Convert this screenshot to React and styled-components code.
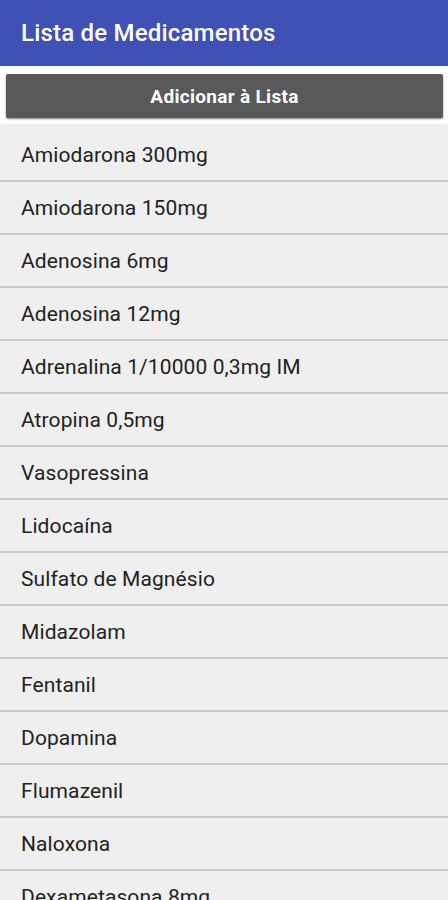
import React from 'react'
import styled, { createGlobalStyle } from 'styled-components'

const Global = createGlobalStyle`
  body {
    margin: 0;
    background: #ffffff;
    font-family: Roboto, "Liberation Sans", sans-serif;
  }
`

const Page = styled.div`
  width: 448px;
  height: 900px;
  overflow: hidden;
  background: #ffffff;
`

const Header = styled.header`
  height: 66px;
  background: #3f51b5;
  border-bottom: 1px solid #3553c8;
  display: flex;
  align-items: center;
  padding: 0 21px;
  box-sizing: border-box;
`

const Title = styled.h1`
  margin: 0;
  color: #ffffff;
  font-size: 24px;
  font-weight: 500;
  letter-spacing: 0.2px;
`

const ButtonWrap = styled.div`
  padding: 8px 5px 6px 6px;
`

const AddButton = styled.button`
  width: 100%;
  height: 44px;
  border: none;
  border-radius: 2px;
  background: #595959;
  color: #ffffff;
  font-family: Roboto, "Liberation Sans", sans-serif;
  font-size: 19px;
  font-weight: 700;
  letter-spacing: 0.3px;
  box-shadow: 0 1px 2px rgba(0, 0, 0, 0.5);
`

const List = styled.ul`
  list-style: none;
  margin: 0;
  padding: 5px 0 0;
  background: #efefef;
`

const Row = styled.li`
  height: 51px;
  display: flex;
  align-items: center;
  padding: 0 21px;
  font-size: 21px;
  letter-spacing: 0.1px;
  color: #222222;
  border-bottom: 2px solid #c9c9c9;
`

const meds = [
  'Amiodarona 300mg',
  'Amiodarona 150mg',
  'Adenosina 6mg',
  'Adenosina 12mg',
  'Adrenalina 1/10000 0,3mg IM',
  'Atropina 0,5mg',
  'Vasopressina',
  'Lidocaína',
  'Sulfato de Magnésio',
  'Midazolam',
  'Fentanil',
  'Dopamina',
  'Flumazenil',
  'Naloxona',
  'Dexametasona 8mg',
]

export default function App() {
  return (
    <Page>
      <Global />
      <Header>
        <Title>Lista de Medicamentos</Title>
      </Header>
      <ButtonWrap>
        <AddButton>Adicionar à Lista</AddButton>
      </ButtonWrap>
      <List>
        {meds.map(m => (
          <Row key={m}>{m}</Row>
        ))}
      </List>
    </Page>
  )
}
